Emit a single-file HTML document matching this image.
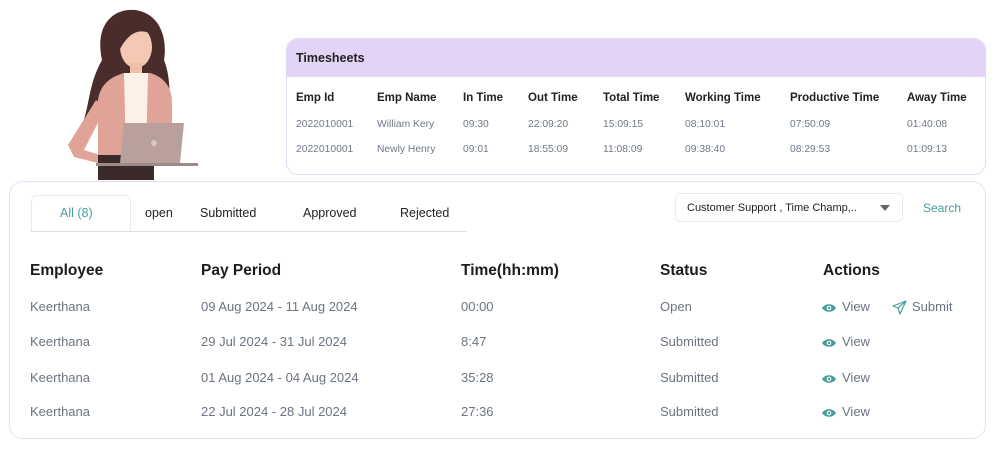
<!DOCTYPE html>
<html><head><meta charset="utf-8"><style>
*{margin:0;padding:0;box-sizing:border-box}
body{width:995px;height:449px;background:#fff;font-family:"Liberation Sans",sans-serif;position:relative;overflow:hidden}
.a{position:absolute;white-space:nowrap}
.top{position:absolute;left:286px;top:38px;width:700px;height:137px;border:1.5px solid #e4dbf3;border-radius:12px;overflow:hidden;background:#fff}
.top .hd{position:absolute;left:0;top:0;right:0;height:38px;background:#e2d3f7}
.th{font-size:11.5px;font-weight:bold;color:#222}
.td{font-size:10.3px;color:#707a86}
.bot{position:absolute;left:9px;top:181px;width:977px;height:258px;border:1.5px solid #e6def5;border-radius:14px;background:#fff}
.H{font-size:15.5px;font-weight:bold;color:#1c1c1c}
.c{font-size:13px;color:#6b7480}
.v{font-size:13px;color:#6b7480}
</style></head><body>
<svg class="a" style="left:60px;top:5px" width="140" height="178" viewBox="0 0 140 178">
<path d="M42 55 C34 18 55 3 75 5 C98 8 108 30 104 55 C112 75 108 95 112 115 C100 120 90 110 85 100 L50 100 C45 115 30 125 22 120 C30 100 28 80 42 55Z" fill="#4a2c2a"/>
<ellipse cx="76" cy="42" rx="16" ry="21" fill="#f4c9b3"/>
<path d="M55 40 C55 15 82 10 96 32 C85 24 72 22 60 44Z" fill="#4a2c2a"/>
<rect x="70" y="58" width="12" height="14" fill="#f0bfa8"/>
<path d="M38 95 C40 80 50 72 64 68 L90 68 C104 72 112 82 112 98 L112 160 L38 160Z" fill="#e0a397"/>
<path d="M64 68 L88 68 L86 150 L66 150Z" fill="#fbf1e6"/>
<path d="M8 140 L36 95 L46 102 L24 145 L40 150 L38 158 L14 152Z" fill="#e0a397"/>
<rect x="38" y="150" width="56" height="25" fill="#3a2a2c"/>
<path d="M64 118 L124 118 L120 158 L60 158Z" fill="#b8a19c"/>
<circle cx="94" cy="138" r="3" fill="#d8c7c3"/>
<rect x="36" y="158" width="102" height="3" fill="#9c8a88"/>
</svg>
<div class="top"><div class="hd"></div>
<div class="a" style="left:9px;top:12px;font-size:12.5px;font-weight:bold;color:#222">Timesheets</div>
</div>
<div class="a th" style="left:296px;top:92px">Emp Id</div>
<div class="a th" style="left:377px;top:92px">Emp Name</div>
<div class="a th" style="left:463px;top:92px">In Time</div>
<div class="a th" style="left:528px;top:92px">Out Time</div>
<div class="a th" style="left:603px;top:92px">Total Time</div>
<div class="a th" style="left:685px;top:92px">Working Time</div>
<div class="a th" style="left:790px;top:92px">Productive Time</div>
<div class="a th" style="left:907px;top:92px">Away Time</div>
<div class="a td" style="left:296px;top:119px">2022010001</div>
<div class="a td" style="left:377px;top:119px">William Kery</div>
<div class="a td" style="left:463px;top:119px">09:30</div>
<div class="a td" style="left:528px;top:119px">22:09:20</div>
<div class="a td" style="left:603px;top:119px">15:09:15</div>
<div class="a td" style="left:685px;top:119px">08:10:01</div>
<div class="a td" style="left:790px;top:119px">07:50:09</div>
<div class="a td" style="left:907px;top:119px">01:40:08</div>
<div class="a td" style="left:296px;top:144px">2022010001</div>
<div class="a td" style="left:377px;top:144px">Newly Henry</div>
<div class="a td" style="left:463px;top:144px">09:01</div>
<div class="a td" style="left:528px;top:144px">18:55:09</div>
<div class="a td" style="left:603px;top:144px">11:08:09</div>
<div class="a td" style="left:685px;top:144px">09:38:40</div>
<div class="a td" style="left:790px;top:144px">08:29:53</div>
<div class="a td" style="left:907px;top:144px">01:09:13</div>

<div class="bot"></div>
<div class="a" style="left:31px;top:195px;width:100px;height:37px;border:1px solid #e8ecef;border-bottom:none;border-radius:6px 6px 0 0"></div>
<div class="a" style="left:30px;top:231px;width:437px;height:1px;background:#dde1e5"></div>
<div class="a" style="left:60px;top:206px;font-size:12.5px;color:#4a9d9c">All (8)</div>
<div class="a" style="left:145px;top:206px;font-size:12.5px;color:#222">open</div>
<div class="a" style="left:200px;top:206px;font-size:12.5px;color:#222">Submitted</div>
<div class="a" style="left:303px;top:206px;font-size:12.5px;color:#222">Approved</div>
<div class="a" style="left:400px;top:206px;font-size:12.5px;color:#222">Rejected</div>
<div class="a" style="left:675px;top:193px;width:228px;height:29px;border:1px solid #e8ecef;border-radius:5px"></div>
<div class="a" style="left:687px;top:202px;font-size:11px;color:#222">Customer Support , Time Champ,..</div>
<div class="a" style="left:880px;top:205px;width:0;height:0;border-left:5px solid transparent;border-right:5px solid transparent;border-top:6px solid #666"></div>
<div class="a" style="left:923px;top:201px;font-size:12px;color:#4a9d9c">Search</div>

<div class="a H" style="left:30px;top:262px">Employee</div>
<div class="a H" style="left:201px;top:262px">Pay Period</div>
<div class="a H" style="left:461px;top:262px">Time(hh:mm)</div>
<div class="a H" style="left:660px;top:262px">Status</div>
<div class="a H" style="left:823px;top:262px">Actions</div>

<div class="a c" style="left:30px;top:299px">Keerthana</div><div class="a c" style="left:201px;top:299px">09 Aug 2024 - 11 Aug 2024</div><div class="a c" style="left:461px;top:299px">00:00</div><div class="a c" style="left:660px;top:299px">Open</div>
<div class="a c" style="left:30px;top:334px">Keerthana</div><div class="a c" style="left:201px;top:334px">29 Jul 2024 - 31 Jul 2024</div><div class="a c" style="left:461px;top:334px">8:47</div><div class="a c" style="left:660px;top:334px">Submitted</div>
<div class="a c" style="left:30px;top:370px">Keerthana</div><div class="a c" style="left:201px;top:370px">01 Aug 2024 - 04 Aug 2024</div><div class="a c" style="left:461px;top:370px">35:28</div><div class="a c" style="left:660px;top:370px">Submitted</div>
<div class="a c" style="left:30px;top:404px">Keerthana</div><div class="a c" style="left:201px;top:404px">22 Jul 2024 - 28 Jul 2024</div><div class="a c" style="left:461px;top:404px">27:36</div><div class="a c" style="left:660px;top:404px">Submitted</div>

<svg class="a" style="left:822px;top:303px" width="14" height="10" viewBox="0 0 14 10"><path d="M0 5 C3 0 11 0 14 5 C11 10 3 10 0 5Z" fill="#4a9d9c"/><circle cx="7" cy="5" r="2.3" fill="#fff"/><circle cx="7" cy="5" r="1.2" fill="#4a9d9c"/></svg>
<div class="a v" style="left:842px;top:299px">View</div>
<svg class="a" style="left:892px;top:300px" width="15" height="15" viewBox="0 0 15 15"><path d="M14 1 L1 6 L6 8 L8 14 Z M6 8 L14 1" fill="none" stroke="#4a9d9c" stroke-width="1.2" stroke-linejoin="round"/></svg>
<div class="a v" style="left:912px;top:299px">Submit</div>
<svg class="a" style="left:822px;top:338px" width="14" height="10" viewBox="0 0 14 10"><path d="M0 5 C3 0 11 0 14 5 C11 10 3 10 0 5Z" fill="#4a9d9c"/><circle cx="7" cy="5" r="2.3" fill="#fff"/><circle cx="7" cy="5" r="1.2" fill="#4a9d9c"/></svg>
<div class="a v" style="left:842px;top:334px">View</div>
<svg class="a" style="left:822px;top:374px" width="14" height="10" viewBox="0 0 14 10"><path d="M0 5 C3 0 11 0 14 5 C11 10 3 10 0 5Z" fill="#4a9d9c"/><circle cx="7" cy="5" r="2.3" fill="#fff"/><circle cx="7" cy="5" r="1.2" fill="#4a9d9c"/></svg>
<div class="a v" style="left:842px;top:370px">View</div>
<svg class="a" style="left:822px;top:408px" width="14" height="10" viewBox="0 0 14 10"><path d="M0 5 C3 0 11 0 14 5 C11 10 3 10 0 5Z" fill="#4a9d9c"/><circle cx="7" cy="5" r="2.3" fill="#fff"/><circle cx="7" cy="5" r="1.2" fill="#4a9d9c"/></svg>
<div class="a v" style="left:842px;top:404px">View</div>
</body></html>
